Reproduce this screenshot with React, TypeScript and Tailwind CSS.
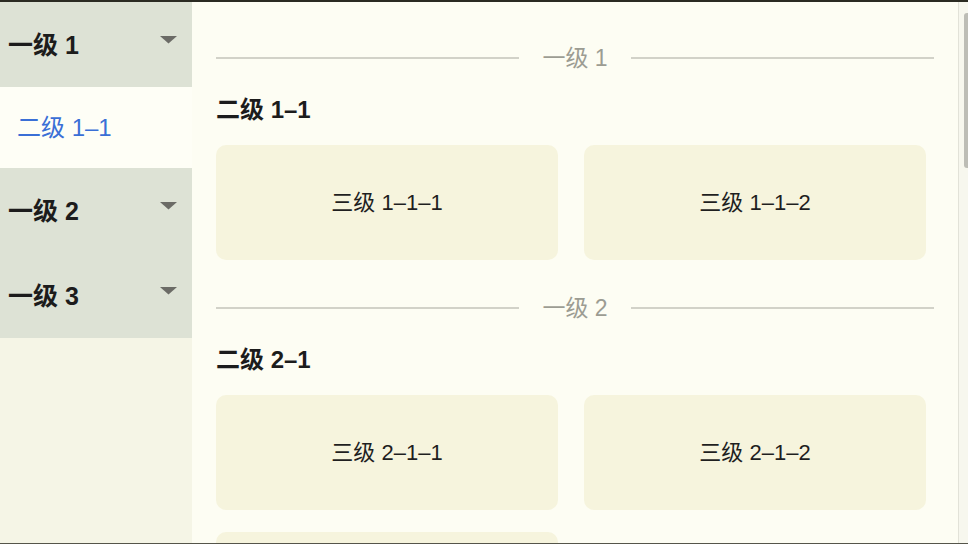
import React from "react";

const FONT = '"Liberation Sans", "Noto Sans CJK SC", sans-serif';

function Caret() {
  return (
    <svg width="17" height="8" viewBox="0 0 17 8" className="block">
      <polygon points="0,0 17,0 8.5,7.5" fill="#6b6b66" />
    </svg>
  );
}

function GroupHeader({ label }: { label: string }) {
  return (
    <div className="flex h-[85px] items-center justify-between bg-[#dde2d5] pl-[8px] pr-[15px]">
      <span className="text-[25px] font-bold leading-[24px] text-[#1c1c1c]">{label}</span>
      <span className="-mt-[10px]">
        <Caret />
      </span>
    </div>
  );
}

function Divider({ label }: { label: string }) {
  return (
    <div className="flex h-[40px] items-center gap-[23px]">
      <div className="h-[2px] flex-1 bg-[#d2d2c8]" />
      <span className="text-[23px] leading-[24px] text-[#9c9c92]">{label}</span>
      <div className="h-[2px] flex-1 bg-[#d2d2c8]" />
    </div>
  );
}

function Card({ label }: { label: string }) {
  return (
    <div className="flex h-[115px] items-center justify-center rounded-[10px] bg-[#f6f4dd] text-[22px] leading-[24px] text-[#1f1f1f]">
      {label}
    </div>
  );
}

function Section({ top, title, cards }: { top: string; title: string; cards: string[] }) {
  return (
    <div className="flex flex-col">
      <Divider label={top} />
      <div className="mt-[20px] text-[24px] font-bold leading-[24px] text-[#1c1c1c]">{title}</div>
      <div className="mt-[23px] grid grid-cols-[342px_342px] gap-x-[26px] gap-y-[22px]">
        {cards.map((c, i) => (
          <Card key={i} label={c} />
        ))}
      </div>
    </div>
  );
}

export default function App() {
  return (
    <div className="flex h-[544px] w-[968px] flex-col overflow-hidden bg-[#fdfdf3]" style={{ fontFamily: FONT }}>
      <div className="h-[2px] bg-[#2b2b22]" />
      <div className="flex min-h-0 flex-1">
        <aside className="flex w-[192px] flex-col bg-[#f5f5e6]">
          <GroupHeader label="一级 1" />
          <div className="flex h-[81px] items-center bg-[#fefef6] pl-[17px]">
            <span className="text-[24px] leading-[24px] text-[#3a6fd6]">二级 1–1</span>
          </div>
          <GroupHeader label="一级 2" />
          <GroupHeader label="一级 3" />
        </aside>
        <main className="flex min-w-0 flex-1 flex-col gap-[28px] overflow-hidden px-[24px] pt-[36px]">
          <Section top="一级 1" title="二级 1–1" cards={["三级 1–1–1", "三级 1–1–2"]} />
          <Section top="一级 2" title="二级 2–1" cards={["三级 2–1–1", "三级 2–1–2", ""]} />
        </main>
        <div className="flex w-[10px] flex-col border-l border-[#e2e2d8] bg-[#f7f7ee] pt-[11px]">
          <div className="ml-[5px] h-[155px] w-[6px] rounded-full bg-[#bdbdb6]" />
        </div>
      </div>
      <div className="h-px bg-[#55554a]" />
    </div>
  );
}
